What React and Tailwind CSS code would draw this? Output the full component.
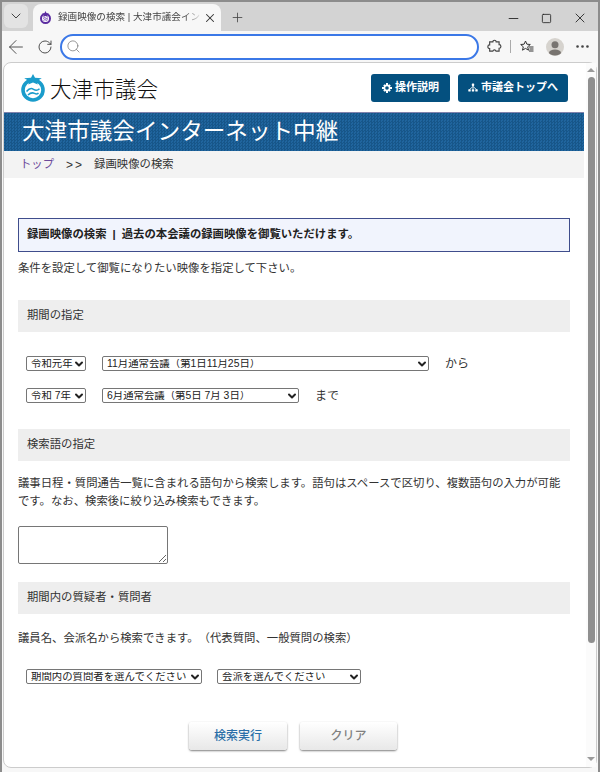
import { ArrowLeft, ChevronDown, Ellipsis, Minus, Plus, RotateCw, Search, Square, X } from "lucide-react";

const sans = "font-['Liberation_Sans','Noto_Sans_CJK_JP',sans-serif]";

function SectionHead({ children }) {
  return <h2 className="flex h-8 items-center bg-[#eeeeee] pl-[9px] text-[11.36px] font-normal text-[#333333]">{children}</h2>;
}

function Logo() {
  return (
    <svg width="26" height="28" viewBox="0 0 26 28" className="shrink-0">
      <circle cx="13" cy="16" r="10" fill="white" stroke="#1a9ccb" strokeWidth="3.6" />
      <path d="M13 0l2 3.800 6.800.5-5.200 3 1.200 3.200-4.800-1.900-4.800 1.900 1.200-3.200-5.200-3 6.800-.5z" fill="#1a9ccb" />
      <path d="M6.500 17.500c2.500-3 5-3.500 7-2.200s4 1.400 6-.6M8 21c2.500-2.400 4.500-2.600 6.500-1.600s3 .6 4-.5" fill="none" stroke="#1a9ccb" strokeWidth="1.500" />
    </svg>
  );
}

function Favicon() {
  return (
    <svg width="13" height="13" viewBox="0 0 13 13" className="shrink-0">
      <circle cx="6.500" cy="7.500" r="4.500" fill="white" stroke="#5b2ca0" strokeWidth="2" />
      <path d="M6.500 0l1.100 2.200 2.400.2-1.800 1.500.6 2.200-2.300-1.200-2.300 1.200.6-2.200-1.800-1.500 2.400-.2z" fill="#5b2ca0" />
      <path d="M4 7.500c1.200-1 2-.8 2.700-.4s1.500.4 2.300-.3M4.500 9.300c1-.7 1.700-.6 2.300-.3s1.200.3 1.800-.3" fill="none" stroke="#5b2ca0" strokeWidth=".9" />
    </svg>
  );
}

function Extensions() {
  return (
    <svg width="15" height="15" viewBox="0 0 18 18" fill="none" stroke="#444444" strokeWidth="1.400">
      <path d="M7 3.500a2 2 0 0 1 4 0h3.500v3.200a2.200 2.200 0 0 1 0 4.400v3.400h-3.700a2 2 0 0 0-3.800 0H3.200v-3a2.200 2.200 0 0 1 0-4.400V3.500z" />
    </svg>
  );
}

// star with the list lines of the favourites button
function Favorites() {
  return (
    <svg width="14" height="13" viewBox="0 0 14 13" fill="none" stroke="#333333" strokeWidth="1">
      <path d="M5.500 1l1.400 3.200 3.400.3-2.600 2.300.8 3.400-3-1.800-3 1.800.8-3.400L.7 4.500l3.400-.3z" />
      <path d="M9 7h4.500M9.500 9h4M9 11h4.500" />
    </svg>
  );
}

function Avatar() {
  return (
    <svg width="18" height="18" viewBox="0 0 18 18" className="shrink-0">
      <circle cx="9" cy="9" r="9" fill="#d6d3ce" />
      <circle cx="9" cy="6.800" r="3.500" fill="#787470" />
      <ellipse cx="9" cy="14.500" rx="6" ry="3" fill="#787470" />
    </svg>
  );
}

function GearIcon() {
  return (
    <svg width="10" height="10" viewBox="0 0 10 10" className="shrink-0">
      <path d="M4 0h2v2H4zM4 8h2v2H4zM0 4h2v2H0zM8 4h2v2H8z" fill="white" />
      <path d="M1.200 2.600l1.400-1.400 1 1-1.400 1.400zM7.400 8.800l1.400-1.400-1-1-1.400 1.400zM8.800 2.600L7.400 1.200l-1 1 1.400 1.400zM2.600 8.800L1.200 7.400l1-1 1.400 1.400z" fill="white" />
      <circle cx="5" cy="5" r="2.600" fill="none" stroke="white" strokeWidth="1.600" />
    </svg>
  );
}

function SitemapIcon() {
  return (
    <svg width="10" height="9" viewBox="0 0 10 9" className="shrink-0" fill="white">
      <rect x="3.800" y="0.500" width="2.400" height="2.400" rx=".6" />
      <rect x="0.300" y="6.200" width="2.400" height="2.400" rx=".6" />
      <rect x="3.800" y="6.200" width="2.400" height="2.400" rx=".6" />
      <rect x="7.300" y="6.200" width="2.400" height="2.400" rx=".6" />
      <path d="M5 2.500v4M5 3.500L1.500 6.500M5 3.500l3.500 3" stroke="white" strokeWidth=".8" fill="none" />
    </svg>
  );
}

function Field({ width, children }) {
  return (
    <div className={`relative h-[15px] shrink-0 ${width}`}>
      <select className="block h-full w-full appearance-none rounded-[2px] border border-[#767676] bg-white pl-[4px] pt-[2px] text-[10.4px] leading-none text-[#222222]">
        <option>{children}</option>
      </select>
      <ChevronDown className="pointer-events-none absolute right-px top-[2px] size-[12px] text-[#222222]" strokeWidth={4} />
    </div>
  );
}

export default function App() {
  return (
    <div className={`${sans} flex h-[772px] w-[600px] flex-col overflow-hidden border-x-2 border-t-2 border-[#8c8c8c] bg-[#f7f7f7]`}>
      {/* tab strip */}
      <div className="flex h-[29px] shrink-0 items-end bg-[#d3d3d3] pl-[2px] pr-[10px]">
        <div className="mb-[3px] flex h-[24px] w-[24px] items-center justify-center rounded-md bg-[#e3e3e3]">
          <ChevronDown className="size-4 text-[#444444]" strokeWidth={1.5} />
        </div>
        <div className="ml-[5px] flex h-[27px] w-[188px] items-center rounded-t-lg bg-[#f7f7f7] pl-[6px] pr-[4px]">
          <Favicon />
          <span className="ml-[6px] w-[144px] overflow-hidden text-[9.6px] whitespace-nowrap text-[#444444] [mask-image:linear-gradient(to_right,black_88%,transparent)]">録画映像の検索 | 大津市議会インターネット中継</span>
          <X className="ml-[1px] size-[14px] text-[#333333]" strokeWidth={1.8} />
        </div>
        <Plus className="mb-[6px] ml-[9px] size-[15px] text-[#444444]" strokeWidth={1.3} />
        <div className="mb-[5px] ml-auto flex w-[82px] items-center justify-between">
          <Minus className="size-[15px] text-[#222222]" strokeWidth={1.4} />
          <Square className="size-[11px] text-[#222222]" strokeWidth={1.8} />
          <X className="size-[16px] text-[#222222]" strokeWidth={1.3} />
        </div>
      </div>

      {/* toolbar */}
      <div className="flex h-[31px] shrink-0 items-center pl-[3px]">
        <ArrowLeft className="size-[22px] shrink-0 text-[#444444]" strokeWidth={1} />
        <RotateCw className="ml-[10px] size-[16px] shrink-0 text-[#444444]" strokeWidth={1.4} />
        <div className="ml-[7px] flex h-[26px] w-[419px] shrink-0 items-center rounded-full border-2 border-[#3b78e7] bg-white pl-[4px]">
          <Search className="size-[15px] text-[#777777]" strokeWidth={1.2} />
        </div>
        <div className="ml-[8px]"><Extensions /></div>
        <div className="ml-[8px] h-[13px] w-px shrink-0 bg-[#aaaaaa]" />
        <div className="ml-[9px]"><Favorites /></div>
        <div className="ml-[12px]"><Avatar /></div>
        <Ellipsis className="ml-[10px] size-[17px] shrink-0 text-[#444444]" strokeWidth={1.8} />
      </div>

      {/* page */}
      <div className="mx-px flex h-[706px] shrink-0 rounded-lg border border-[#cccccc] bg-white">
        <div className="mr-[2px] min-w-0 flex-1">
          <div className="flex h-[49px] items-center pl-[16px] pr-[16px]">
            <Logo />
            <span className="ml-[4px] font-['Noto_Sans_CJK_JP',serif] text-[21.6px] leading-none font-light text-[#111111]">大津市議会</span>
            <a className="ml-auto flex h-[28px] w-[79px] items-center justify-center gap-[3px] rounded-[3px] bg-[#04507f] text-[11px] font-bold text-white">
              <GearIcon />操作説明
            </a>
            <a className="ml-2 flex h-[28px] w-[110px] items-center justify-center gap-[3px] rounded-[3px] bg-[#04507f] text-[11px] font-bold text-white">
              <SitemapIcon />市議会トップへ
            </a>
          </div>
          <div className="flex h-[39px] items-center border-t border-[#7f83ad] bg-[#1b5e96] bg-[repeating-conic-gradient(#175689_0_25%,#20659e_0_50%)] bg-[length:3px_3px] pl-[18px] text-[22.6px] leading-none text-white">
            大津市議会インターネット中継
          </div>
          <nav className="flex h-[27px] items-center bg-[#f3f3f3] pl-[16px] text-[11.36px] text-[#333333]">
            <a className="text-[#6b4a9b]">トップ</a>
            <span className="ml-[12px] tracking-[2px] text-[12px]">&gt;&gt;</span>
            <span className="ml-[10px]">録画映像の検索</span>
          </nav>

          <main className="px-[14px] text-[11.36px] text-[#333333] [text-spacing-trim:space-all]">
            <p className="mt-[40px] flex h-[34px] items-center border border-[#3f4d8c] bg-[#f1f4fd] pl-[8px] font-bold whitespace-pre text-[#222222]">
              録画映像の検索<span className="mx-[6px]">|</span>過去の本会議の録画映像を御覧いただけます。
            </p>
            <p className="mt-[8px] leading-[16px]">条件を設定して御覧になりたい映像を指定して下さい。</p>

            <div className="mt-[24px]"><SectionHead>期間の指定</SectionHead></div>
            <div className="mt-[24px] flex h-[15px] items-center pl-[8px]">
              <Field width="w-[60px]">令和元年</Field>
              <div className="ml-4"><Field width="w-[327px]">11月通常会議（第1日11月25日）</Field></div>
              <span className="ml-4 text-[12px]">から</span>
            </div>
            <div className="mt-[17px] flex h-[15px] items-center pl-[8px]">
              <Field width="w-[60px]">令和 7年</Field>
              <div className="ml-4"><Field width="w-[197px]">6月通常会議（第5日 7月 3日）</Field></div>
              <span className="ml-4 text-[12px]">まで</span>
            </div>

            <div className="mt-[26px]"><SectionHead>検索語の指定</SectionHead></div>
            <p className="mt-[13px] leading-[18px]">議事日程・質問通告一覧に含まれる語句から検索します。語句はスペースで区切り、複数語句の入力が可能です。なお、検索後に絞り込み検索もできます。</p>
            <textarea className="mt-[16px] block h-[38px] w-[150px] rounded-[2px] border border-[#767676] bg-white" />

            <div className="mt-[18px]"><SectionHead>期間内の質疑者・質問者</SectionHead></div>
            <p className="mt-[16px] leading-[16px]">議員名、会派名から検索できます。（代表質問、一般質問の検索）</p>
            <div className="mt-[23px] flex h-[15px] items-center pl-[8px]">
              <Field width="w-[176px]">期間内の質問者を選んでください</Field>
              <div className="ml-[15px]"><Field width="w-[144px]">会派を選んでください</Field></div>
            </div>

            <div className="mt-[38px] flex justify-center gap-[13px] pr-[2px]">
              <button className="h-[28px] w-[98px] rounded-[3px] bg-gradient-to-b from-white to-[#e8e8e8] text-[12px] font-medium text-[#2a6fa8] shadow-[0_1px_2px_rgba(0,0,0,0.5)]">検索実行</button>
              <button className="h-[28px] w-[97px] rounded-[3px] bg-gradient-to-b from-white to-[#e8e8e8] text-[12px] font-medium text-[#808080] shadow-[0_1px_2px_rgba(0,0,0,0.5)]">クリア</button>
            </div>
          </main>
        </div>

        {/* scrollbar */}
        <div className="flex w-[10px] shrink-0 flex-col items-center bg-[#fbfbfb] pb-[6px] pt-[5px]">
          <div className="h-0 w-0 border-x-[4px] border-b-[4px] border-x-transparent border-b-[#9a9a9a]" />
          <div className="mt-[5px] h-[566px] w-[7px] rounded-full bg-[#8f8f8f]" />
          <div className="mt-auto h-0 w-0 border-x-[4px] border-t-[4px] border-x-transparent border-t-[#9a9a9a]" />
        </div>
      </div>
    </div>
  );
}
